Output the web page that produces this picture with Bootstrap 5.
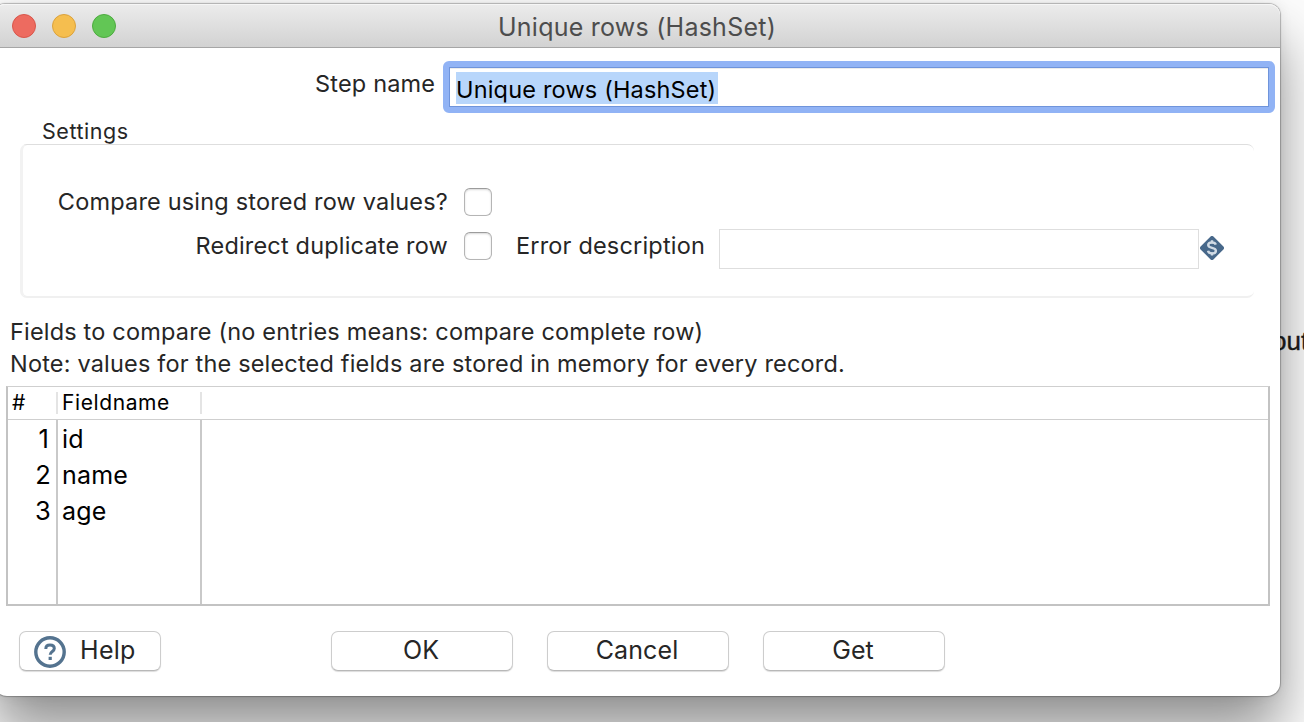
<!DOCTYPE html>
<html lang="en">
<head>
<meta charset="utf-8">
<title>Unique rows (HashSet)</title>
<link href="https://cdn.jsdelivr.net/npm/bootstrap@5.3.0/dist/css/bootstrap.min.css" rel="stylesheet">
<style>
html,body{height:722px;overflow:hidden}
body{background:#fcfcfc;font-family:Inter,"Liberation Sans",sans-serif;font-size:23.5px;letter-spacing:.18px;line-height:32px;color:#262626;position:relative}
/* label of the canvas step that the dialog partly covers */
.behind{position:absolute;left:1272px;top:325px;font:26px/32px "Liberation Sans",sans-serif;letter-spacing:0;color:#1c1c1c;-webkit-text-stroke:.4px #1c1c1c}
.win{width:1286px;height:692px;margin:4px 0 0 -6px;background:#fff;border-radius:11px 11px 13px 13px;position:relative;box-shadow:0 0 1px 1px rgba(0,0,0,.25),0 36px 56px rgba(0,0,0,.42),0 0 14px rgba(0,0,0,.08)}
.titlebar{height:44px;background:linear-gradient(#ececec,#d2d2d2);border-bottom:1px solid #a6a6a6;border-radius:11px 11px 0 0;box-shadow:inset 0 1px #f6f6f6;padding:1px 0 0 18px;gap:16px;color:#4d4d4d;font-size:25px;letter-spacing:.24px}
.dot{width:24px;height:24px;border-radius:50%;border:1px solid}
.dot-r{background:#ed6b60;border-color:#d8564b}
.dot-y{background:#f5be4f;border-color:#dba23c}
.dot-g{background:#62c655;border-color:#4dab3f}
.cap{margin-left:366px;padding-top:2px}
.steprow{padding:13px 0 0 321px;height:65px}
.steprow label{padding-top:7px;width:120px;white-space:nowrap}
.stepinput{width:832px;height:52px;border:6px solid #91b3f5;border-radius:6px;margin-left:8px}
.stepinner{border:1px solid #6f94db;height:40px;padding:4px 0 0 6px;box-shadow:inset 0 1px #ececec;color:#000}
.sel{background:#b8d6fb;width:262px;height:32px;line-height:35px}
.legend-txt{font-size:21.5px;letter-spacing:.55px;line-height:28px;margin-left:48px;height:31px;padding-top:4px}
.group{margin-left:26px;width:1234px;height:154px;border:2px solid #f0f0f0;border-width:1px 0 2px 3px;border-top-color:#dedede;border-left-color:#f2f2f2;border-radius:7px;padding:41px 0 0 1px}
.lab{width:424px;text-align:right}
.grow{height:44px}
.chk{width:28px;height:28px;border:1px solid #b5b5b5;border-top-color:#9c9c9c;border-radius:6px;box-shadow:inset 0 1px 2px #d8d8d8;margin:2px 0 0 16px}
.err{width:480px;height:40px;border:1.5px solid #dedede;margin:-1px 0 0 14px}
.var-icon{margin:6px 0 0 1px}
.note{margin:18px 0 0 16px;height:69px;white-space:nowrap}
.grid-tbl{width:1264px;height:220px;margin:1px 0 0 12px;border:2px solid #c3c3c3;border-top:1px solid #cfcfcf;color:#000}
.hd{height:33px;border-bottom:1px solid #cfcfcf;font-size:21px;letter-spacing:.6px}
.hd>div{height:22px;line-height:22px;margin-top:5px}
.c1{width:50px;border-right:2px solid #c9c9c9}
.c2{width:144px;border-right:2px solid #c9c9c9;padding-left:4px}
.hd .c1,.hd .c2{border-color:#e4e4e4}
.bd{height:184px;font-size:25px;line-height:36px}
.bd .c1{text-align:right;padding-right:5px;font-size:25.5px}
.bd .c1 span{margin-right:2px}
.bd>div{padding-top:1px}
.foot{padding:25px 0 0 25px;gap:34px}
.mb{height:40px;border:1px solid #cdcdcd;border-bottom-color:#b8b8b8;border-radius:7px;box-shadow:0 1px 1px rgba(0,0,0,.14);background:#fff;width:182px;color:#262626;font-size:25px;letter-spacing:.1px;line-height:36px;padding:0 2px 2px 0}
.mb-help{width:142px;margin-right:136px;padding:0 0 0 14px}
.mb-help span{margin:-2px 0 0 14px;letter-spacing:.3px}
.mb-help svg{margin-top:2px}
</style>
</head>
<body>
<div class="behind">out</div>
<main class="win">
<header class="titlebar d-flex align-items-center"><i class="dot dot-r"></i><i class="dot dot-y"></i><i class="dot dot-g"></i><span class="cap">Unique rows (HashSet)</span></header>
<div class="steprow d-flex"><label>Step name</label><div class="stepinput"><div class="stepinner"><div class="sel">Unique rows (HashSet)</div></div></div></div>
<div class="legend-txt">Settings</div>
<section class="group">
<div class="grow d-flex align-items-start"><div class="lab">Compare using stored row values?</div><i class="chk"></i></div>
<div class="grow d-flex align-items-start"><div class="lab">Redirect duplicate row</div><i class="chk"></i><span class="ms-4">Error description</span><div class="err"></div>
<svg class="var-icon" width="24" height="24" viewBox="0 0 24 24"><path d="M12 2 22 12 12 22 2 12Z" fill="#47688a" stroke="#47688a" stroke-width="4" stroke-linejoin="round"/><path d="M15.800 8.700C15.300 7 13.800 6.500 12 6.500c-2.200 0-3.800.9-3.800 2.600 0 3.900 7.700 1.700 7.700 5.600 0 1.800-1.700 2.700-3.900 2.700-2 0-3.600-.7-4-2.600" fill="none" stroke="#d0dae4" stroke-width="2.400"/><path d="M12 4.300v3M12 16.500v3" stroke="#d0dae4" stroke-width="2.400"/></svg></div>
</section>
<div class="note">Fields to compare (no entries means: compare complete row)<br>Note: values for the selected fields are stored in memory for every record.</div>
<section class="grid-tbl">
<div class="hd d-flex"><div class="c1 ps-1">#</div><div class="c2">Fieldname</div></div>
<div class="bd d-flex"><div class="c1"><span>1</span><br>2<br>3</div><div class="c2">id<br>name<br>age</div></div>
</section>
<footer class="foot d-flex">
<button class="mb mb-help d-flex align-items-center"><svg width="32" height="32" viewBox="0 0 32 32" fill="none" stroke="#54738f"><circle cx="16" cy="16" r="14.200" stroke-width="3.400"/><path d="M11.800 13c0-2.600 1.800-3.900 4.200-3.900s4.300 1.300 4.300 3.500c0 3-4.100 2.900-4.100 6.200" stroke-width="3"/><path d="M16.200 20.800v3.200" stroke-width="3.200"/></svg><span>Help</span></button>
<button class="mb">OK</button><button class="mb">Cancel</button><button class="mb">Get</button>
</footer>
</main>
<script src="https://cdn.jsdelivr.net/npm/bootstrap@5.3.0/dist/js/bootstrap.bundle.min.js"></script>
</body>
</html>
